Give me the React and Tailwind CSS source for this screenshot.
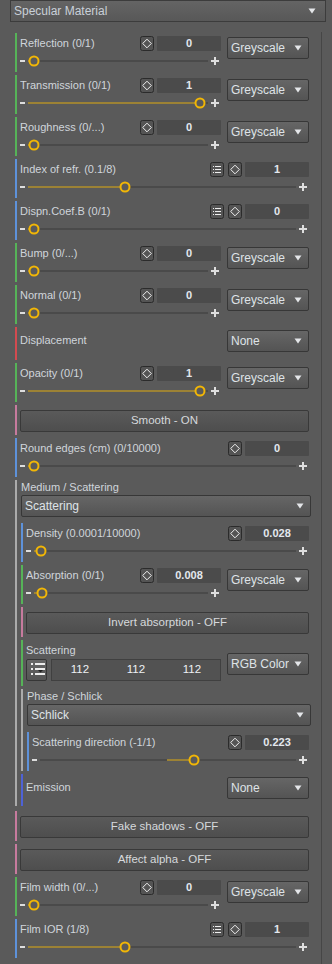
import React from "react";

const BAR = {
  green: "bg-[#56b358]",
  blue: "bg-[#5e92da]",
  red: "bg-[#d34b50]",
  pink: "bg-[#c77b9e]",
  grey: "bg-[#ababab]",
  indigo: "bg-[#4e62d6]",
};

function Arrow() {
  return (
    <svg width="8" height="6" viewBox="0 0 8 6" className="shrink-0">
      <path d="M0.5 0.5H7.5L4 5.5Z" fill="#e4e6e9" />
    </svg>
  );
}

function Dropdown({ children, className = "" }) {
  return (
    <div
      className={`h-[22px] shrink-0 flex items-center justify-between pl-[3px] pr-[6px] rounded-[2px] border border-[#373737] bg-linear-to-b from-[#666666] to-[#545454] text-[12px] text-[#dfe3e7] ${className}`}
    >
      <span className="truncate">{children}</span>
      <Arrow />
    </div>
  );
}

function KeyBtn({ className = "" }) {
  return (
    <svg width="14" height="15" viewBox="0 0 14 15" className={`shrink-0 ${className}`}>
      <rect x="0.5" y="0.5" width="13" height="14" rx="2" fill="#545454" stroke="#2b2b2b" />
      <path d="M7 3.2L11.3 7.5L7 11.8L2.7 7.5Z" fill="none" stroke="#efefef" />
    </svg>
  );
}

function ListBtn() {
  return (
    <svg width="14" height="15" viewBox="0 0 14 15" className="shrink-0">
      <rect x="0.5" y="0.5" width="13" height="14" rx="2" fill="#545454" stroke="#2b2b2b" />
      <g fill="#eeeeee">
        <rect x="3" y="4" width="1" height="1" />
        <rect x="3" y="7" width="1" height="1" />
        <rect x="3" y="10" width="1" height="1" />
        <rect x="5" y="4" width="6" height="1" />
        <rect x="5" y="7" width="6" height="1" />
        <rect x="5" y="10" width="6" height="1" />
      </g>
    </svg>
  );
}

function Plus() {
  return (
    <svg width="8" height="8" viewBox="0 0 8 8" className="shrink-0 mr-[2px]">
      <path d="M0 4H8M4 0V8" stroke="#dedede" strokeWidth="2" />
    </svg>
  );
}

function Slider({ pos, from = 0 }) {
  const at = (v) => `calc(${v} * (100% - 14px) + 6px)`;
  const left = from === 0 ? "0px" : at(from);
  return (
    <div className="flex items-center h-[12px] mt-[4px]">
      <div className="w-[5px] h-[2px] bg-[#dddddd] shrink-0" />
      <div className="relative flex-1 h-[2px] mx-[3px] bg-[#4a4a4a]">
        <div
          className="absolute top-0 h-full bg-[#9c8235]"
          style={{ left, width: `calc(${at(pos)} - ${left})` }}
        />
        <div
          className="absolute top-1/2 w-[11px] h-[11px] -translate-x-1/2 -translate-y-1/2 rounded-full border-2 border-[#f1b606] bg-[#5a5a5a]"
          style={{ left: at(pos) }}
        />
      </div>
      <Plus />
    </div>
  );
}

function Row({ bar, className = "", pl = "pl-[3px]", children }) {
  return (
    <div className={`flex ${className}`}>
      <div className={`w-[2px] shrink-0 ${bar}`} />
      <div className={`flex-1 min-w-0 ${pl}`}>{children}</div>
    </div>
  );
}

function SliderRow({ bar, label, value, pos, from, dropdown, list }) {
  return (
    <Row bar={bar} className="h-[39px]">
      <div className="flex">
        <div className="flex-1 min-w-0">
          <div className="flex items-center h-[15px] mt-[3px]">
            <span className="flex-1 min-w-0 truncate leading-[15px]">{label}</span>
            {list && <ListBtn />}
            <KeyBtn className={list ? "ml-[4px]" : ""} />
            <div className="ml-[3px] w-[64px] h-[15px] shrink-0 rounded-[1px] bg-[#4b4b4b] text-center leading-[15px] font-bold text-[#e3e8ee]">
              {value}
            </div>
          </div>
          <Slider pos={pos} from={from} />
        </div>
        {dropdown && (
          <Dropdown className="w-[82px] ml-[6px] mt-[4px]">{dropdown}</Dropdown>
        )}
      </div>
    </Row>
  );
}

function LabelDropRow({ bar, label, value, h }) {
  return (
    <Row bar={bar} className={h}>
      <div className="flex items-start">
        <div className="flex-1 mt-[6px] h-[15px] leading-[15px]">{label}</div>
        <Dropdown className="w-[82px] ml-[6px] mt-[3px]">{value}</Dropdown>
      </div>
    </Row>
  );
}

function ButtonRow({ label }) {
  return (
    <Row bar={BAR.pink} className="h-[30px]">
      <div className="mt-[5px] h-[22px] flex items-center justify-center rounded-[2px] border border-[#393939] bg-linear-to-b from-[#5a5a5a] to-[#4e4e4e] text-[11.5px] text-[#d6d9dc]">
        {label}
      </div>
    </Row>
  );
}

function ScatterIcon() {
  return (
    <div className="w-[21px] h-[22px] shrink-0 rounded-[2px] border border-[#363636] bg-linear-to-b from-[#666666] to-[#545454]">
      <svg width="19" height="20" viewBox="0 0 19 20">
        <g fill="#ececec">
          <rect x="4" y="3" width="2" height="2" />
          <rect x="4" y="8" width="2" height="2" />
          <rect x="4" y="13" width="2" height="2" />
          <rect x="8" y="3" width="10" height="2" />
          <rect x="8" y="8" width="10" height="2" />
          <rect x="8" y="13" width="10" height="2" />
        </g>
        <path d="M11 10H16L13.5 12.5Z" fill="#1e1e1e" />
      </svg>
    </div>
  );
}

function ColorRow() {
  return (
    <Row bar={BAR.green} className="h-[46px]">
      <div className="flex items-start">
        <div className="flex-1 min-w-0">
          <div className="mt-[3px] h-[15px] leading-[15px]">Scattering</div>
          <div className="mt-[1px] flex">
            <ScatterIcon />
            <div className="ml-[4px] flex-1 h-[22px] flex items-center border border-[#404040] bg-[#525252] text-[11.5px] text-[#eef1f4]">
              <span className="flex-1 text-center">112</span>
              <span className="flex-1 text-center">112</span>
              <span className="flex-1 text-center">112</span>
            </div>
          </div>
        </div>
        <Dropdown className="w-[82px] ml-[6px] mt-[13px]">RGB Color</Dropdown>
      </div>
    </Row>
  );
}

function Group({ label, value, className = "", children }) {
  return (
    <Row bar={BAR.grey} pl="pl-[4px]" className={className}>
      <div className="h-[15px] leading-[15px]">{label}</div>
      <Dropdown className="mr-[-2px]">{value}</Dropdown>
      <div className="mt-[6px] flex flex-col gap-[3px]">{children}</div>
    </Row>
  );
}

export default function App() {
  return (
    <div className="w-[332px] h-[964px] overflow-hidden flex flex-col bg-[#5a5a5a] text-[11px] text-[#d0d5db] font-['Liberation_Sans',Arial,sans-serif]">
      <div className="ml-[10px] mr-[6px] h-[22px] shrink-0 flex items-center justify-between pl-[3px] pr-[9px] border border-[#3c3c3c] bg-linear-to-b from-[#646464] to-[#585858] text-[12px] text-[#c9d0d8]">
        <span>Specular Material</span>
        <Arrow />
      </div>

      <div className="mt-[10px] flex-1 w-[322px] border-r border-[#464646] pl-[15px] pr-[12px] pt-[1px] flex flex-col gap-[3px]">
        <SliderRow bar={BAR.green} label="Reflection (0/1)" value="0" pos={0} dropdown="Greyscale" />
        <SliderRow bar={BAR.green} label="Transmission (0/1)" value="1" pos={1} dropdown="Greyscale" />
        <SliderRow bar={BAR.green} label="Roughness (0/...)" value="0" pos={0} dropdown="Greyscale" />
        <SliderRow bar={BAR.blue} label="Index of refr. (0.1/8)" value="1" pos={0.358} list />
        <SliderRow bar={BAR.blue} label="Dispn.Coef.B (0/1)" value="0" pos={0} list />
        <SliderRow bar={BAR.green} label="Bump (0/...)" value="0" pos={0} dropdown="Greyscale" />
        <SliderRow bar={BAR.green} label="Normal (0/1)" value="0" pos={0} dropdown="Greyscale" />
        <LabelDropRow bar={BAR.red} label="Displacement" value="None" h="h-[33px]" />
        <SliderRow bar={BAR.green} label="Opacity (0/1)" value="1" pos={1} dropdown="Greyscale" />
        <ButtonRow label="Smooth - ON" />
        <SliderRow bar={BAR.blue} label="Round edges (cm) (0/10000)" value="0" pos={0} />

        <Group label="Medium / Scattering" value="Scattering" className="mb-[2px]">
          <SliderRow bar={BAR.blue} label="Density (0.0001/10000)" value="0.028" pos={0.005} />
          <SliderRow bar={BAR.green} label="Absorption (0/1)" value="0.008" pos={0.01} dropdown="Greyscale" />
          <ButtonRow label="Invert absorption - OFF" />
          <ColorRow />
          <Group label="Phase / Schlick" value="Schlick">
            <SliderRow bar={BAR.blue} label="Scattering direction (-1/1)" value="0.223" pos={0.6115} from={0.5} />
          </Group>
          <LabelDropRow bar={BAR.indigo} label="Emission" value="None" h="h-[32px]" />
        </Group>

        <ButtonRow label="Fake shadows - OFF" />
        <ButtonRow label="Affect alpha - OFF" />
        <SliderRow bar={BAR.green} label="Film width (0/...)" value="0" pos={0} dropdown="Greyscale" />
        <SliderRow bar={BAR.blue} label="Film IOR (1/8)" value="1" pos={0.358} list />
      </div>
    </div>
  );
}
